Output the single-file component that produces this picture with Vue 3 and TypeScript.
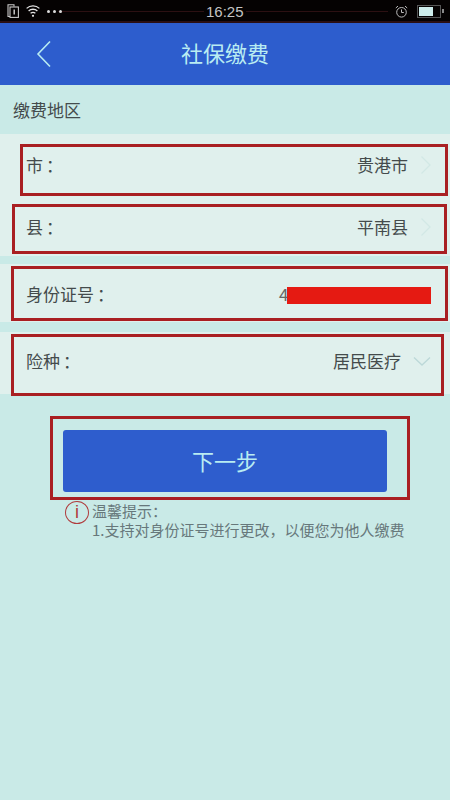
<script setup lang="ts">
interface Mark { name: string; box: Record<string, string> }
const marks: Mark[] = [
  { name: 'city', box: { left: '20px', top: '144px', width: '428px', height: '52px' } },
  { name: 'county', box: { left: '12px', top: '204px', width: '435px', height: '50px' } },
  { name: 'id', box: { left: '11px', top: '266px', width: '437px', height: '55px' } },
  { name: 'kind', box: { left: '11px', top: '334px', width: '433px', height: '62px' } },
  { name: 'next', box: { left: '50px', top: '416px', width: '360px', height: '84px' } },
]
</script>

<template>
  <div class="page">
    <div class="status">
      <div class="status-left">
        <svg width="12" height="14" viewBox="0 0 12 14" fill="none" stroke="#c9c9c9" stroke-width="1.1">
          <path d="M1 2.5V12.5H3M1 2.5V0.8H7V2.5" />
          <rect x="3" y="3" width="8.4" height="10.4" />
          <path d="M7.2 5.5V10.5" stroke-width="1.5" />
        </svg>
        <svg width="14" height="14" viewBox="0 0 14 14" fill="none" stroke="#e4e4e4" stroke-width="1.3">
          <path d="M0.6 4.4C4.2 1 9.8 1 13.4 4.4M2.6 6.9C5 4.7 9 4.7 11.4 6.9M4.6 9.3C6 8.2 8 8.2 9.4 9.3" />
          <circle cx="7" cy="11.8" r="1.1" fill="#e4e4e4" stroke="none" />
        </svg>
        <span class="dots"><i></i><i></i><i></i></span>
      </div>
      <span class="time">16:25</span>
      <div class="status-right">
        <svg width="13" height="13" viewBox="0 0 13 13" fill="none" stroke="#bdbdbd" stroke-width="1">
          <circle cx="6.5" cy="7.3" r="4.8" />
          <path d="M6.5 4.4V7.5H8.8M0.8 3L3 1.1M12.2 3L10 1.1" />
        </svg>
        <div class="battery"><div class="level"></div></div>
        <div class="tip"></div>
      </div>
    </div>

    <header class="header">
      <svg class="back" width="16" height="28" viewBox="0 0 16 28" fill="none" stroke="#b9ecf2" stroke-width="1.6">
        <path d="M14 1.5L2 14L14 26.5" />
      </svg>
      <h1 class="title">社保缴费</h1>
    </header>

    <div class="section">缴费地区</div>

    <section class="group group-address">
      <div class="row row-city">
        <span>市<span class="colon">：</span></span>
        <span class="value">贵港市
          <svg class="chevron" width="12" height="20" viewBox="0 0 12 20" fill="none" stroke="#d2e8e5" stroke-width="1.3">
            <path d="M1.5 1.5L10 10L1.5 18.5" />
          </svg>
        </span>
      </div>
      <div class="row row-county">
        <span>县<span class="colon">：</span></span>
        <span class="value">平南县
          <svg class="chevron" width="12" height="20" viewBox="0 0 12 20" fill="none" stroke="#d2e8e5" stroke-width="1.3">
            <path d="M1.5 1.5L10 10L1.5 18.5" />
          </svg>
        </span>
      </div>
    </section>

    <section class="group row row-id">
      <span>身份证号<span class="colon">：</span></span>
      <span class="id-value">4<span class="redact"></span></span>
    </section>

    <section class="group row row-kind">
      <span>险种<span class="colon">：</span></span>
      <span class="value value-kind">居民医疗
        <svg class="caret" width="18" height="11" viewBox="0 0 18 11" fill="none" stroke="#bcd8d8" stroke-width="1.3">
          <path d="M1 1.5L9 9L17 1.5" />
        </svg>
      </span>
    </section>

    <div class="action">
      <button class="next" type="button">下一步</button>
    </div>

    <div class="hint">
      <div class="info">i</div>
      <div class="hint-text">
        <div>温馨提示：</div>
        <div>1.支持对身份证号进行更改，以便您为他人缴费</div>
      </div>
    </div>

    <div v-for="m in marks" :key="m.name" class="mark" :style="m.box"></div>
  </div>
</template>

<style>
html, body { margin: 0; padding: 0; }
</style>

<style scoped>
.page {
  position: relative;
  width: 450px;
  height: 800px;
  overflow: hidden;
  background: #c9eae7;
  font-family: "Noto Sans CJK SC", "Liberation Sans", sans-serif;
  color: #444b4c;
}
.status {
  position: relative;
  height: 23px;
  box-sizing: border-box;
  padding: 1px 6px 0 7px;
  background: #050202;
  border-bottom: 2px solid #2a0f12;
  display: flex;
  align-items: center;
  justify-content: space-between;
}
.status::before {
  content: "";
  position: absolute;
  left: 58px;
  right: 62px;
  top: 11px;
  height: 1px;
  background: #2c1012;
}
.status-left, .status-right { position: relative; display: flex; align-items: center; }
.status-left { gap: 7px; }
.dots { display: flex; gap: 3px; }
.dots i { width: 3px; height: 3px; border-radius: 50%; background: #dcdcdc; }
.time {
  position: absolute;
  left: 204px;
  top: 2px;
  padding: 0 2px;
  background: #050202;
  font-family: "Liberation Sans", sans-serif;
  font-size: 15px;
  line-height: 19px;
  color: #c4c4c4;
}
.battery {
  width: 21px;
  height: 9px;
  margin-left: 9px;
  padding: 1px 0 1px 1px;
  box-sizing: content-box;
  border: 1px solid #555;
}
.level { width: 14px; height: 9px; background: #cdeceb; }
.tip { width: 2px; height: 4px; margin-left: 1px; background: #888; }
.header {
  position: relative;
  height: 62px;
  background: #2d5dcd;
  display: flex;
  align-items: center;
  justify-content: center;
}
.back { position: absolute; left: 36px; top: 17px; }
.title {
  margin: 0 0 4px;
  font-size: 22px;
  font-weight: 400;
  line-height: 58px;
  color: #b9ecf2;
}
.section {
  height: 49px;
  box-sizing: border-box;
  padding: 12px 0 0 13px;
  font-size: 17px;
  line-height: 26px;
}
.group { background: #e0f0ed; }
.group-address { height: 122px; margin-bottom: 8px; padding-top: 8px; box-sizing: border-box; }
.row {
  display: flex;
  align-items: center;
  justify-content: space-between;
  box-sizing: border-box;
  padding-left: 26px;
  font-size: 17px;
}
.colon { margin-left: 3px; }
.row-city { height: 44px; padding-right: 18px; }
.row-county { height: 56px; margin-top: 12px; padding-right: 18px; }
.row-id { height: 58px; margin-bottom: 10px; padding-right: 19px; }
.row-kind { height: 62px; padding-right: 19px; padding-bottom: 6px; }
.value { display: flex; align-items: center; gap: 12px; }
.chevron { margin-top: 2px; }
.caret { margin-top: 3px; }
.id-value { display: flex; align-items: center; width: 152px; color: #666; }
.redact { width: 144px; height: 17px; margin-top: 4px; margin-left: -1px; background: #e51a12; }
.action { padding: 36px 0 0 63px; }
.next {
  display: block;
  width: 324px;
  height: 62px;
  padding: 0 0 3px;
  border: 0;
  border-radius: 3px;
  background: #2e5dcd;
  color: #b9ecf2;
  font-family: inherit;
  font-size: 22px;
}
.hint {
  display: flex;
  gap: 3px;
  padding: 8px 0 0 65px;
  color: #67787b;
  font-size: 15px;
  line-height: 19px;
}
.info {
  flex: none;
  width: 22px;
  height: 21px;
  margin-top: 1px;
  border: 1.5px solid #b03a3c;
  border-radius: 50%;
  text-align: center;
  font-family: "Liberation Sans", sans-serif;
  font-size: 18px;
  line-height: 21px;
  color: #b03a3c;
}
.hint-text { margin-top: 1px; }
.mark {
  position: absolute;
  box-sizing: border-box;
  border: 3px solid #a91f22;
  pointer-events: none;
}
</style>
